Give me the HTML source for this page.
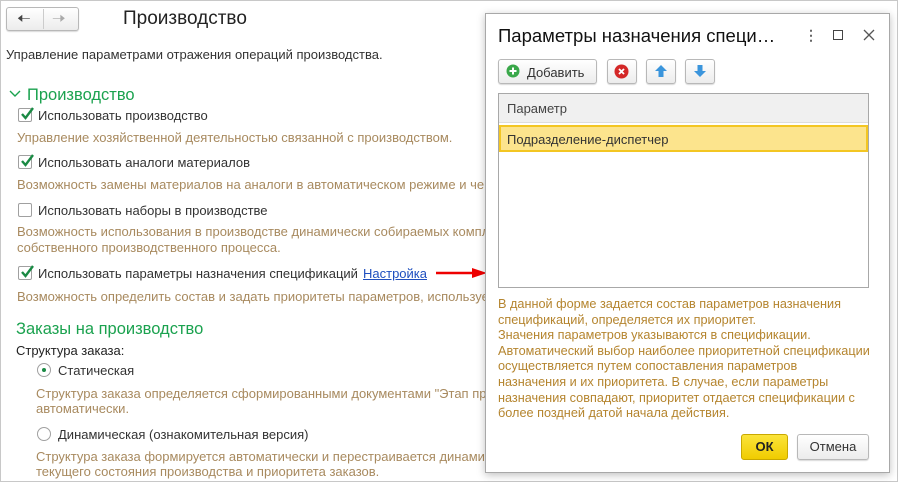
<!DOCTYPE html>
<html><head><meta charset="utf-8"><style>
*{margin:0;padding:0;box-sizing:border-box}
body{width:898px;height:482px;overflow:hidden;background:#fff;font-family:"Liberation Sans",sans-serif;font-size:13px;color:#333;position:relative}
.a{position:absolute;white-space:nowrap}
.frame{position:absolute;left:0;top:0;width:898px;height:482px;border:1px solid #c8c8c8}
.d{color:#a88a5f}
.g{color:#1ba24f;font-size:16.5px}
.cb{position:absolute;width:14px;height:14px;border:1px solid #a0a0a0;border-radius:2px;background:#fff}
.cb svg{position:absolute;left:0;top:-3px}
.rb{position:absolute;width:14px;height:14px;border:1px solid #a0a0a0;border-radius:50%;background:#fff}
.btn{position:absolute;border:1px solid #b8b8b8;border-radius:3px;background:linear-gradient(#fff,#ececec);box-shadow:0 1px 1px rgba(0,0,0,.15)}
.dt{color:#b5852f;font-size:12.7px;line-height:15.6px}
</style></head><body>
<div class="frame"></div>
<div class="btn" style="left:6px;top:7px;width:73px;height:24px"></div>
<div class="a" style="left:43px;top:9px;width:1px;height:20px;background:#ccc"></div>
<div class="a" style="left:17px;top:8px;font-size:16px;color:#444">&#129056;</div>
<div class="a" style="left:52px;top:8px;font-size:16px;color:#aaa">&#129058;</div>
<div class="a" style="left:123px;top:8px;font-size:19px;color:#222">Производство</div>
<div class="a" style="left:6px;top:47px">Управление параметрами отражения операций производства.</div>
<div class="a" style="left:9px;top:87px;"><svg width="12" height="10"><path d="M1 2 L6 7 L11 2" stroke="#1ba24f" stroke-width="1.4" fill="none"/></svg></div>
<div class="a g" style="left:27px;top:86px">Производство</div>

<div class="cb" style="left:18px;top:108px"><svg width="16" height="16"><path d="M3 8 L6.5 12 L14 2" stroke="#1a8a44" stroke-width="2.4" fill="none"/></svg></div>
<div class="a" style="left:38px;top:108px">Использовать производство</div>
<div class="a d" style="left:17px;top:130px">Управление хозяйственной деятельностью связанной с производством.</div>
<div class="cb" style="left:18px;top:155px"><svg width="16" height="16"><path d="M3 8 L6.5 12 L14 2" stroke="#1a8a44" stroke-width="2.4" fill="none"/></svg></div>
<div class="a" style="left:38px;top:155px">Использовать аналоги материалов</div>
<div class="a d" style="left:17px;top:177px">Возможность замены материалов на аналоги в автоматическом режиме и чер</div>
<div class="cb" style="left:18px;top:203px"></div>
<div class="a" style="left:38px;top:203px">Использовать наборы в производстве</div>
<div class="a d" style="left:17px;top:224px">Возможность использования в производстве динамически собираемых компл</div>
<div class="a d" style="left:17px;top:240px">собственного производственного процесса.</div>
<div class="cb" style="left:18px;top:266px"><svg width="16" height="16"><path d="M3 8 L6.5 12 L14 2" stroke="#1a8a44" stroke-width="2.4" fill="none"/></svg></div>
<div class="a" style="left:38px;top:266px">Использовать параметры назначения спецификаций</div>
<div class="a" style="left:363px;top:266px;color:#1f4fbf;text-decoration:underline">Настройка</div>
<svg class="a" style="left:436px;top:267px" width="52" height="12"><path d="M0 6 L38 6" stroke="#e00" stroke-width="2.5"/><path d="M36 1 L51 6 L36 11 Z" fill="#e00"/></svg>
<div class="a d" style="left:17px;top:289px">Возможность определить состав и задать приоритеты параметров, использует</div>
<div class="a g" style="left:16px;top:320px">Заказы на производство</div>
<div class="a" style="left:16px;top:343px;color:#222">Структура заказа:</div>
<div class="rb" style="left:37px;top:363px"><div style="position:absolute;left:4px;top:4px;width:4px;height:4px;border-radius:50%;background:#1a8a44"></div></div>
<div class="a" style="left:58px;top:363px">Статическая</div>
<div class="a d" style="left:36px;top:386px">Структура заказа определяется сформированными документами "Этап про</div>
<div class="a d" style="left:36px;top:401px">автоматически.</div>
<div class="rb" style="left:37px;top:427px"></div>
<div class="a" style="left:58px;top:427px">Динамическая (ознакомительная версия)</div>
<div class="a d" style="left:36px;top:449px">Структура заказа формируется автоматически и перестраивается динамич</div>
<div class="a d" style="left:36px;top:464px">текущего состояния производства и приоритета заказов.</div>

<div class="a" style="left:485px;top:13px;width:405px;height:460px;background:#fff;border:1px solid #a8a8a8;box-shadow:0 2px 8px rgba(0,0,0,.25)"></div>
<div class="a" style="left:498px;top:25px;font-size:18.5px;color:#111">Параметры назначения специ…</div>
<div class="a" style="left:804px;top:27px;font-size:14px;color:#666;font-weight:bold">⋮</div>
<div class="a" style="left:833px;top:30px;width:10px;height:10px;border:1.5px solid #444"></div>
<svg class="a" style="left:863px;top:29px" width="12" height="12"><path d="M1 1 L11 11 M11 1 L1 11" stroke="#555" stroke-width="1.3"/></svg>

<div class="btn" style="left:498px;top:59px;width:99px;height:25px"></div>
<svg class="a" style="left:506px;top:64px" width="14" height="14"><circle cx="7" cy="7" r="6.5" fill="#3aa84a"/><path d="M7 3.5V10.5M3.5 7H10.5" stroke="#fff" stroke-width="2"/></svg>
<div class="a" style="left:527px;top:65px">Добавить</div>
<div class="btn" style="left:607px;top:59px;width:30px;height:25px"></div>
<svg class="a" style="left:614px;top:64px" width="15" height="15"><circle cx="7.5" cy="7.5" r="7" fill="#d42828"/><path d="M5 5L10 10M10 5L5 10" stroke="#fff" stroke-width="1.8"/></svg>
<div class="btn" style="left:646px;top:59px;width:30px;height:25px"></div>
<svg class="a" style="left:654px;top:64px" width="14" height="14"><path d="M7 1L13 7H9.5V13H4.5V7H1Z" fill="#3b95dc"/></svg>
<div class="btn" style="left:685px;top:59px;width:30px;height:25px"></div>
<svg class="a" style="left:693px;top:64px" width="14" height="14"><path d="M7 13L13 7H9.5V1H4.5V7H1Z" fill="#3b95dc"/></svg>

<div class="a" style="left:498px;top:93px;width:371px;height:195px;border:1px solid #a8a8a8;background:#fff"></div>
<div class="a" style="left:499px;top:94px;width:369px;height:29px;background:#f0f0f0;border-bottom:1px solid #ddd"></div>
<div class="a" style="left:507px;top:101px;color:#444">Параметр</div>
<div class="a" style="left:499px;top:125px;width:369px;height:27px;background:#fce48d;border:2px solid #f3c623"></div>
<div class="a" style="left:507px;top:132px;color:#333">Подразделение-диспетчер</div>

<div class="a dt" style="left:498px;top:297px">В данной форме задается состав параметров назначения<br>спецификаций, определяется их приоритет.<br>Значения параметров указываются в спецификации.<br>Автоматический выбор наиболее приоритетной спецификации<br>осуществляется путем сопоставления параметров<br>назначения и их приоритета. В случае, если параметры<br>назначения совпадают, приоритет отдается спецификации с<br>более поздней датой начала действия.</div>

<div class="a" style="left:741px;top:434px;width:47px;height:26px;border:1px solid #c9a800;border-radius:3px;background:linear-gradient(#fbe43a,#f0cc00);font-weight:bold;text-align:center;line-height:24px;color:#222">ОК</div>
<div class="btn" style="left:797px;top:434px;width:72px;height:26px;text-align:center;line-height:24px;color:#333">Отмена</div>
</body></html>
